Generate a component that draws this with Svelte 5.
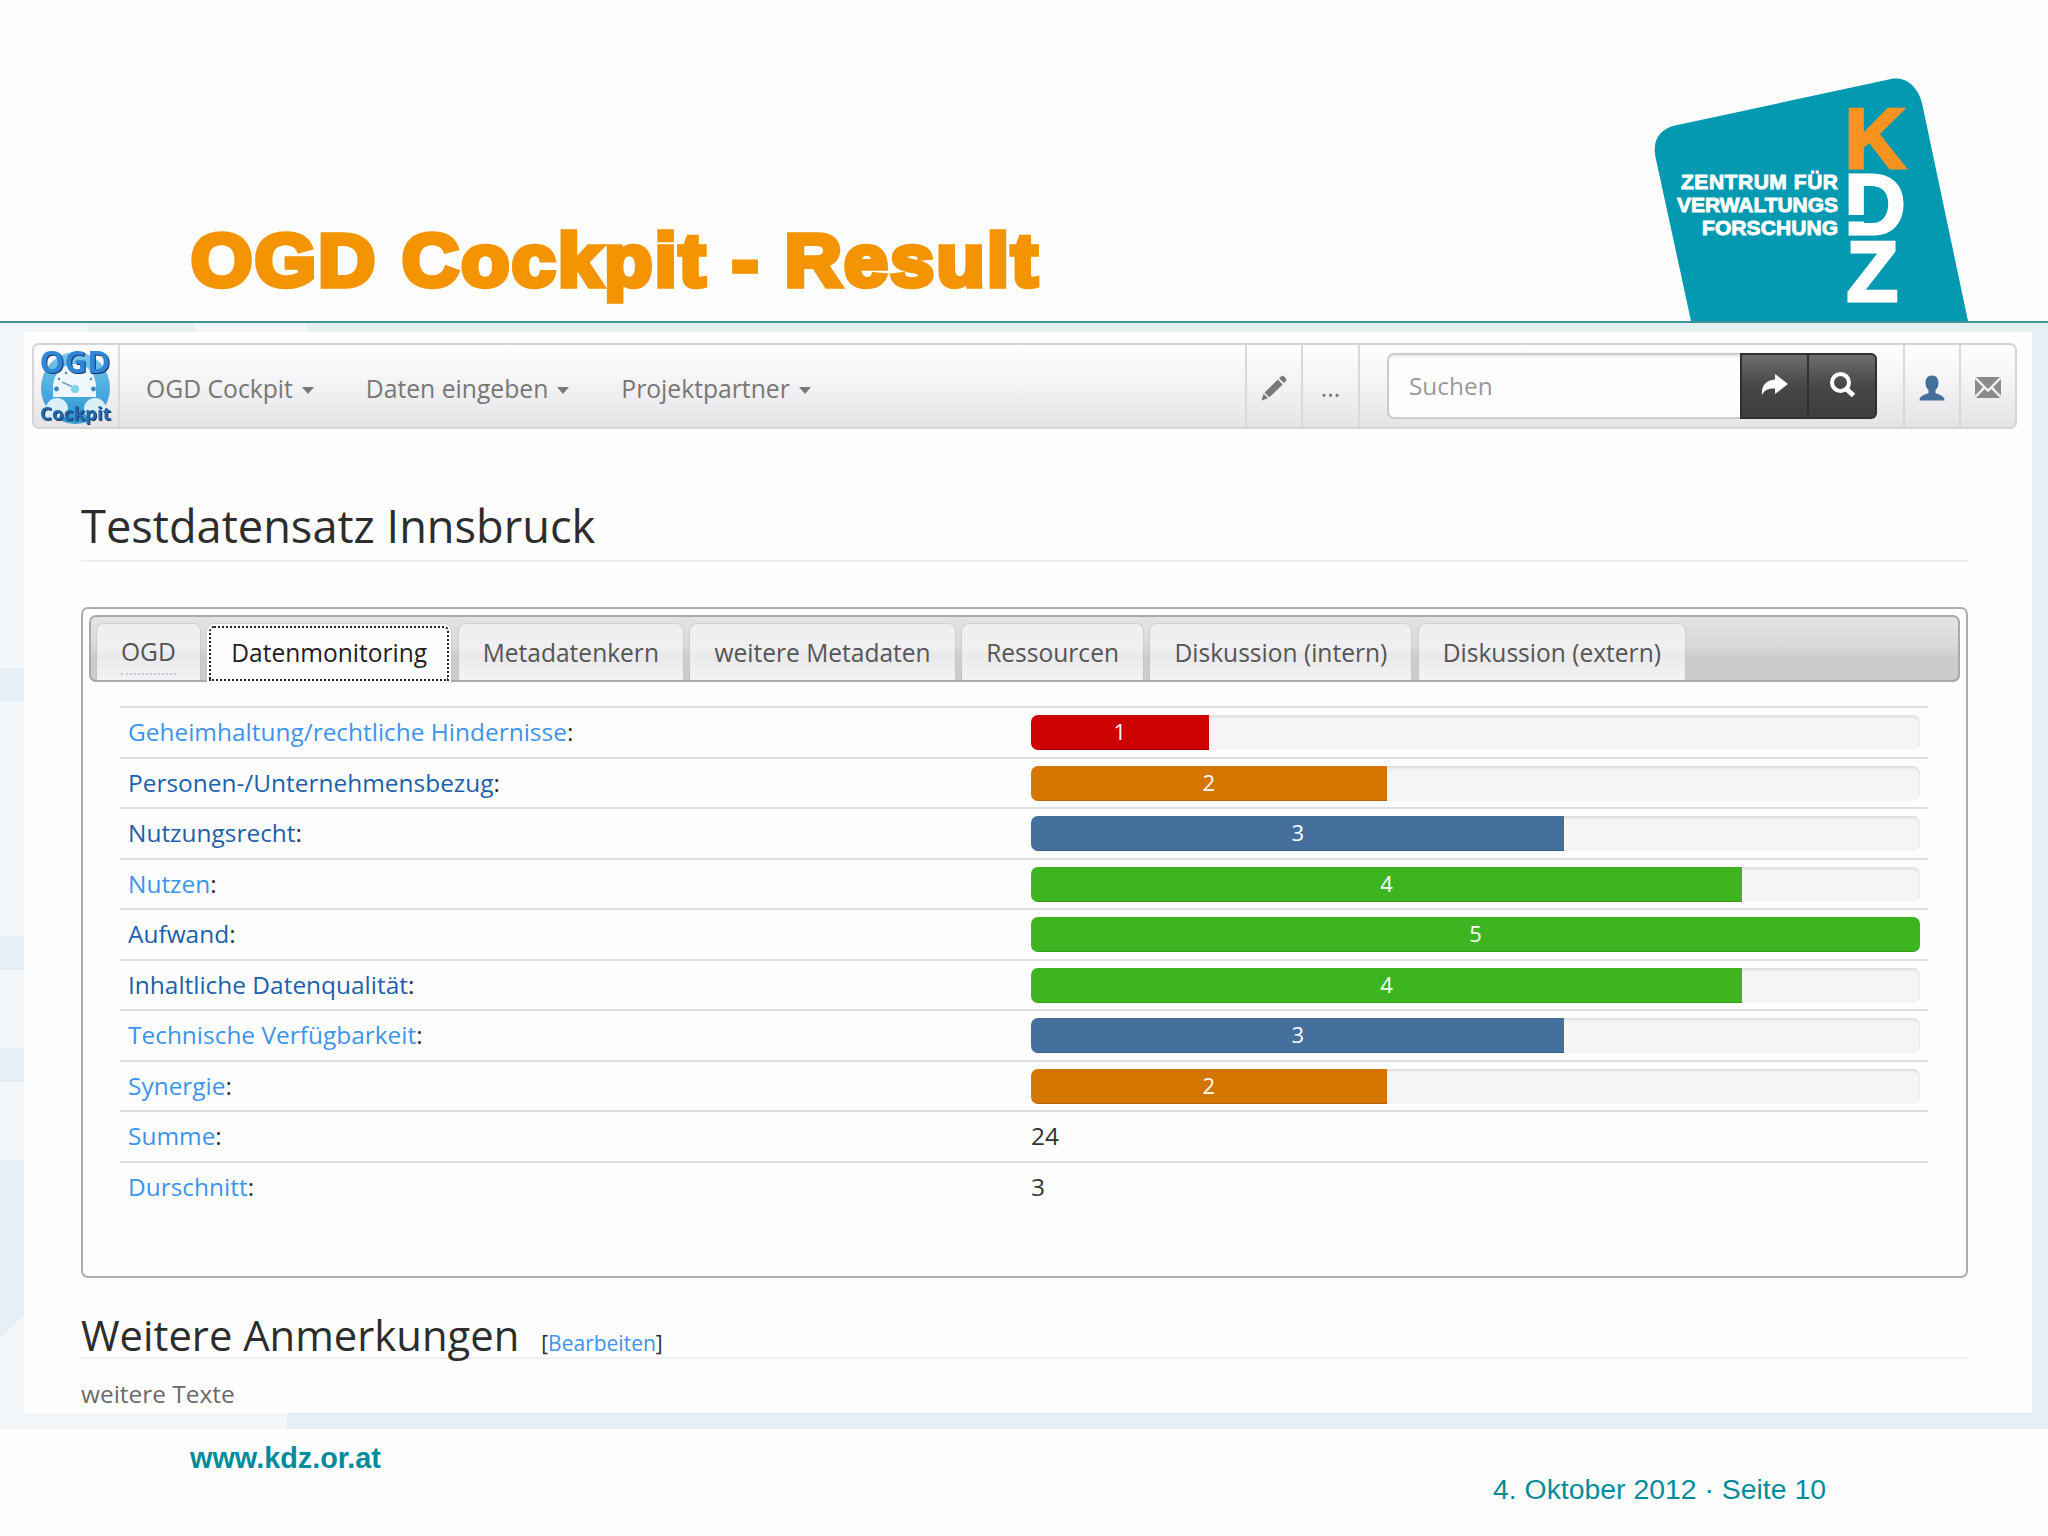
<script>
  const menus = ['OGD Cockpit', 'Daten eingeben', 'Projektpartner'];

  const tabs = [
    'OGD',
    'Datenmonitoring',
    'Metadatenkern',
    'weitere Metadaten',
    'Ressourcen',
    'Diskussion (intern)',
    'Diskussion (extern)'
  ];
  let activeTab = $state('Datenmonitoring');

  const MAX_SCORE = 5;

  // Bar colour per score
  const LEVELS = {
    1: 'red',
    2: 'orange',
    3: 'blue',
    4: 'green',
    5: 'green'
  };

  const scores = [
    { label: 'Geheimhaltung/rechtliche Hindernisse', value: 1 },
    { label: 'Personen-/Unternehmensbezug', value: 2, visited: true },
    { label: 'Nutzungsrecht', value: 3, visited: true },
    { label: 'Nutzen', value: 4 },
    { label: 'Aufwand', value: 5, visited: true },
    { label: 'Inhaltliche Datenqualität', value: 4, visited: true },
    { label: 'Technische Verfügbarkeit', value: 3 },
    { label: 'Synergie', value: 2 }
  ];

  const sum = scores.reduce((total, s) => total + s.value, 0);
  const average = sum / scores.length;
</script>

<div class="slide">
  <header class="slide-header">
    <h1 class="slide-title">OGD Cockpit - Result</h1>
    <svg class="kdz-logo" viewBox="0 0 320 251" width="320" height="251">
      <path d="M41 251 L5.5 87 C2 70 10 59 25 55.5 L241 9 C256 6 268 17 272 33 L318 251 Z" fill="#0399b1" />
      <g class="kdz-name" text-anchor="end">
        <text x="188" y="119" textLength="157">ZENTRUM FÜR</text>
        <text x="188" y="142" textLength="161">VERWALTUNGS</text>
        <text x="188" y="165" textLength="136">FORSCHUNG</text>
      </g>
      <g class="kdz-letters">
        <text x="194.5" y="97.5" fill="#f7931e" stroke="#f7931e">K</text>
        <text x="194.5" y="163.5" fill="#fff" stroke="#fff">D</text>
        <rect x="198" y="145" width="17.5" height="6.5" fill="#0399b1" />
        <text x="196.5" y="230.5" fill="#fff" stroke="#fff">Z</text>
      </g>
    </svg>
  </header>

  <div class="backdrop">
    <main class="page">
      <nav class="navbar">
        <a class="brand" href="#home" aria-label="OGD Cockpit">
          <svg viewBox="0 0 84 82" width="84" height="82">
            <defs>
              <linearGradient id="dial" x1="0" y1="0" x2="0" y2="1">
                <stop offset="0" stop-color="#7cc8ec" />
                <stop offset="0.6" stop-color="#45a9dc" />
                <stop offset="1" stop-color="#2f93cf" />
              </linearGradient>
            </defs>
            <ellipse cx="41.5" cy="43" rx="34.5" ry="36" fill="url(#dial)" />
            <path d="M19 52 V43 C19 30 27 19 41 19 C55 19 62 30 62 43 V52 Z" fill="#eef7fc" />
            <circle cx="22.5" cy="44" r="2.4" fill="#3d85b5" />
            <circle cx="59.5" cy="44" r="2.4" fill="#3d85b5" />
            <circle cx="25" cy="34" r="1.2" fill="#3d85b5" />
            <circle cx="57" cy="34" r="1.2" fill="#3d85b5" />
            <circle cx="32" cy="28" r="1.2" fill="#3d85b5" />
            <path d="M28 37 L41 43" stroke="#69a9c4" stroke-width="1.5" />
            <circle cx="41" cy="44" r="4" fill="#7fd0e8" />
            <circle cx="23" cy="64" r="11" fill="#d9effa" />
            <circle cx="61" cy="64" r="11" fill="#d9effa" />
            <g class="brand-text" text-anchor="middle">
              <text x="41" y="28" font-size="30" fill="#2f86d6" textLength="71" lengthAdjust="spacingAndGlyphs">OGD</text>
              <text x="41.5" y="75" font-size="18" fill="#2569ad" textLength="71" lengthAdjust="spacingAndGlyphs">Cockpit</text>
            </g>
          </svg>
        </a>

        <ul class="menus">
          {#each menus as menu}
            <li>{menu}<span class="caret"></span></li>
          {/each}
        </ul>

        <div class="cell edit">
          <svg viewBox="0 0 26 26" width="26" height="26" fill="#777">
            <path d="M20 1.5 Q21.5 0 23 1.5 L25 3.5 Q26 5 24.8 6.2 L23 8 L18 3.3 Z" />
            <path d="M16.8 4.6 L21.7 9.4 L8.3 22.3 L3.6 17.6 Z" />
            <path d="M2.6 18.8 L7 23.2 L0.5 25.5 Z" />
          </svg>
        </div>
        <div class="cell more">...</div>

        <form class="search">
          <input type="text" placeholder="Suchen" />
          <button type="button" aria-label="Seite">
            <svg viewBox="0 0 27 21" width="27" height="21">
              <path d="M14 0 L27 10 L14 20 V14.5 C7 14 3.5 16 1 21 C0 12 5 6 14 5.5 Z" fill="#fff" />
            </svg>
          </button>
          <button type="button" aria-label="Suchen">
            <svg viewBox="0 0 27 26" width="27" height="26" fill="none" stroke="#fff">
              <circle cx="11.5" cy="10.5" r="8.5" stroke-width="4" />
              <path d="M17.5 17 L24.5 23.5" stroke-width="5" />
            </svg>
          </button>
        </form>

        <div class="cell user">
          <svg viewBox="0 0 26 26" width="26" height="26" fill="#446e9b">
            <path d="M13 0.5 C17.5 0.5 19.5 3.5 19.5 8 C19.5 11.5 18 13.5 16.5 15 V18 C18.5 19.5 25.5 20 25.5 25.5 H0.5 C0.5 20 7.5 19.5 9.5 18 V15 C8 13.5 6.5 11.5 6.5 8 C6.5 3.5 8.5 0.5 13 0.5 Z" />
          </svg>
        </div>
        <div class="cell mail">
          <svg viewBox="0 0 26 21" width="26" height="21" fill="#8a8a8a">
            <path d="M1 0 H25 L13 12 Z" />
            <path d="M0 2 L8 10.3 L0 18.5 Z" />
            <path d="M26 2 L18 10.3 L26 18.5 Z" />
            <path d="M1 21 L9.7 12 L13 15.2 L16.3 12 L25 21 Z" />
          </svg>
        </div>
      </nav>

      <div class="content">
        <h2 class="title">Testdatensatz Innsbruck</h2>

        <section class="panel">
          <div class="tabs">
            {#each tabs as tab}
              <button class="tab" class:active={tab === activeTab} onclick={() => (activeTab = tab)}>
                <span class:abbr={tab === 'OGD'}>{tab}</span>
              </button>
            {/each}
          </div>

          <div class="scores">
            {#each scores as score}
              <div class="row">
                <div><a href="#score" class:visited={score.visited}>{score.label}</a>:</div>
                <div class="track">
                  <div class="bar {LEVELS[score.value]}" style="width: {(score.value / MAX_SCORE) * 100}%">
                    {score.value}
                  </div>
                </div>
              </div>
            {/each}
            <div class="row">
              <div><a href="#score">Summe</a>:</div>
              <div>{sum}</div>
            </div>
            <div class="row">
              <div><a href="#score">Durschnitt</a>:</div>
              <div>{average}</div>
            </div>
          </div>
        </section>

        <h3 class="subtitle">
          Weitere Anmerkungen
          <span class="edit-link">[<a href="#edit">Bearbeiten</a>]</span>
        </h3>
        <p class="note">weitere Texte</p>
      </div>
    </main>
  </div>

  <footer class="slide-footer">
    <div class="site">www.kdz.or.at</div>
    <div class="date">4. Oktober 2012 · Seite 10</div>
  </footer>
</div>

<style>
  :global(body) {
    background: #fefefe;
  }

  .slide {
    width: 2048px;
    height: 1536px;
    overflow: hidden;
    display: flex;
    flex-direction: column;
    font-family: 'Open Sans', 'Noto Sans', sans-serif;
    color: #333;
  }

  .slide * {
    box-sizing: border-box;
  }

  a {
    color: #3d94ea;
    text-decoration: none;
  }

  a.visited {
    color: #1c60ab;
  }

  /* ===== Slide header ===== */
  .slide-header {
    display: flex;
    justify-content: space-between;
    align-items: flex-end;
    height: 323px;
    padding: 0 78px 0 191px;
    border-bottom: 2px solid #3f939b;
  }

  .slide-title {
    margin: 0 0 16px;
    font: 700 75px/90px 'Liberation Sans', Arial, sans-serif;
    letter-spacing: 2.3px;
    color: #f39400;
    -webkit-text-stroke: 5.5px #f39400;
    transform: scaleX(1.05);
    transform-origin: left;
    white-space: nowrap;
  }

  .kdz-logo {
    display: block;
  }

  .kdz-name,
  .kdz-letters {
    font-family: 'Liberation Sans', Arial, sans-serif;
    font-weight: 700;
  }

  .kdz-name {
    font-size: 21px;
    fill: #fff;
    stroke: #fff;
    stroke-width: 0.9px;
  }

  .kdz-letters text {
    font-size: 84.5px;
    stroke-width: 3px;
  }

  /* ===== Patterned area behind the page ===== */
  .backdrop {
    height: 1106px;
    padding: 9px 16px 16px 24px;
    background:
      linear-gradient(#e8f0f3, #e8f0f3) 88px 0 / 107px 9px no-repeat,
      linear-gradient(#e5f0f3, #e5f0f3) 307px 0 / 1741px 9px no-repeat,
      linear-gradient(#e5eff8, #e5eff8) 2032px 9px / 16px 1081px no-repeat,
      linear-gradient(#e8eef6, #e8eef6) 287px 1090px / 1761px 16px no-repeat,
      linear-gradient(#e6eef6, #e6eef6) 0 345px / 24px 34px no-repeat,
      linear-gradient(#e6eef6, #e6eef6) 0 613px / 24px 34px no-repeat,
      linear-gradient(#e6eef6, #e6eef6) 0 725px / 24px 34px no-repeat,
      linear-gradient(#e6eef6, #e6eef6) 0 837px / 24px 155px no-repeat,
      linear-gradient(to bottom right, #e6eef6 50%, #f4f7f9 50%) 0 992px / 24px 24px no-repeat,
      #f4f7f9;
  }

  .page {
    height: 1081px;
    padding-top: 11px;
    background: #fefefe;
  }

  /* ===== Navbar ===== */
  .navbar {
    display: flex;
    height: 86px;
    margin: 0 15px 0 8px;
    border: 2px solid #d5d4d7;
    border-radius: 7px;
    background: linear-gradient(#fefeff, #f3f2f4 50%, #e5e3e6);
    font-size: 24.7px;
    color: #777;
  }

  .brand {
    width: 86px;
    border-right: 2px solid #dcdbde;
  }

  .brand svg {
    display: block;
    overflow: visible;
  }

  .brand-text {
    font-weight: 700;
    filter: drop-shadow(1.5px 1.5px 0 #17395f);
  }

  .menus {
    display: flex;
    align-items: center;
    gap: 52px;
    flex: 1;
    margin: 0;
    padding: 5px 0 0 26px;
    list-style: none;
  }

  .menus li {
    display: flex;
    align-items: center;
  }

  .caret {
    margin: 4px 0 0 9px;
    border: 6.5px solid transparent;
    border-top: 7px solid #777;
    border-bottom: 0;
  }

  .cell {
    display: flex;
    align-items: center;
    justify-content: center;
    width: 56px;
    padding-top: 3px;
    border-left: 2px solid #d9d8db;
  }

  .more {
    width: 59px;
    border-right: 2px solid #d9d8db;
  }

  .search {
    display: flex;
    height: 66px;
    margin: 8px 26px 0 27px;
  }

  .search input {
    width: 353px;
    padding: 0 0 2px 20px;
    border: 2px solid #ccc;
    border-right: 0;
    border-radius: 7px 0 0 7px;
    background: #fefefe;
    box-shadow: inset 0 2px 2px rgba(0, 0, 0, 0.07);
    font: 24.4px 'Open Sans', sans-serif;
  }

  .search input::placeholder {
    color: #999;
    opacity: 1;
  }

  .search button {
    display: flex;
    align-items: center;
    justify-content: center;
    width: 69px;
    padding: 0 0 3px;
    border: 2px solid #303032;
    background: linear-gradient(#6d6d6f, #474749 50%, #3e3e40);
  }

  .search button + button {
    width: 68px;
    border-left: 0;
    border-radius: 0 6px 6px 0;
  }

  /* ===== Content ===== */
  .content {
    margin: 0 64px 0 57px;
    font-size: 24.45px;
  }

  .title {
    height: 67px;
    margin: 66px 0 0;
    border-bottom: 2px solid #efeef1;
    font-size: 45.2px;
    font-weight: 400;
    line-height: 62px;
    color: #2d2d2d;
  }

  .panel {
    height: 671px;
    margin-top: 45px;
    padding: 6px;
    border: 2px solid #aeadb0;
    border-radius: 7px;
  }

  .tabs {
    display: flex;
    gap: 7.5px;
    height: 67px;
    padding: 7px 6px 0;
    border: 2px solid #a9a8ab;
    border-radius: 7px;
    background: linear-gradient(#e4e3e5, #d9d8da 45%, #cccbcd 65%, #cccbcd);
  }

  .tab {
    height: 56px;
    padding: 0 24px;
    border: 0;
    border-radius: 7px 7px 0 0;
    background: linear-gradient(#efeef0, #f0eff1 48%, #e9e8ea 53%, #f3f3f4);
    box-shadow: 0 0 0 1px rgba(190, 188, 192, 0.45);
    clip-path: inset(-2px -2px 0 -2px);
    font: 24.55px 'Open Sans', sans-serif;
    color: #555;
    white-space: nowrap;
  }

  .tab.active {
    height: 59px;
    padding-bottom: 3px;
    background: #fefefe;
    outline: 2px dotted #222;
    outline-offset: -4px;
    color: #212121;
  }

  .abbr {
    display: block;
    height: 40px;
    margin-top: 6px;
    border-bottom: 2px dotted #c9c6ee;
  }

  .scores {
    margin: 24px 32px 0 31px;
  }

  .row {
    display: grid;
    grid-template-columns: 903px 889px;
    height: 50.5px;
    padding: 7px 0 0 8px;
    border-top: 2px solid #dddcdf;
    line-height: 34px;
  }

  .track {
    height: 35px;
    border-radius: 7px;
    overflow: hidden;
    background: #f5f4f6;
    box-shadow: inset 0 2px 3px rgba(0, 0, 0, 0.1);
  }

  .bar {
    height: 35px;
    font-size: 22px;
    line-height: 32px;
    text-align: center;
    color: #fff;
    box-shadow: inset 0 -1px 0 rgba(0, 0, 0, 0.15);
  }

  .red { background: #cd0200; }
  .orange { background: #d47500; }
  .blue { background: #446e9b; }
  .green { background: #3cb521; }

  .subtitle {
    display: flex;
    align-items: baseline;
    gap: 22px;
    height: 49px;
    margin: 32px 0 0;
    border-bottom: 2px solid #efeef1;
    font-size: 41.75px;
    font-weight: 400;
    line-height: 49px;
    color: #2d2d2d;
  }

  .edit-link {
    font-size: 21px;
  }

  .note {
    margin: 18px 0 0;
    line-height: 34px;
    color: #6b6b6b;
  }

  /* ===== Slide footer ===== */
  .slide-footer {
    display: flex;
    flex: 1;
    justify-content: space-between;
    align-items: flex-start;
    padding: 13px 222px 0 190px;
    font: 28.4px/32px 'Liberation Sans', Arial, sans-serif;
    color: #008c9b;
  }

  .site {
    font-size: 28.8px;
    font-weight: 700;
  }

  .date {
    padding-top: 31px;
  }
</style>
